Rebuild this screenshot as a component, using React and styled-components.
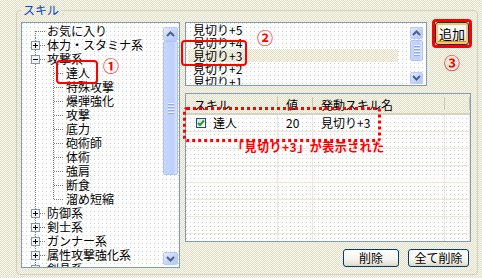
import React from 'react'
import styled, { createGlobalStyle } from 'styled-components'

const dither = `repeating-conic-gradient(#e4e0c6 0 25%, #f9f8f0 0 50%) 0 0 / 2px 2px`
const dots = `conic-gradient(at 1px 1px, #fff 75%, #d4d4d4 0) 0 0 / 4px 4px`

const GlobalStyle = createGlobalStyle`
    html, body {
        margin: 0;
        padding: 0;
    }
    body {
        width: 482px;
        height: 278px;
        overflow: hidden;
        font-family: "Noto Sans CJK JP", "Noto Sans", sans-serif;
        font-size: 12px;
        color: #000;
    }
`

const Page = styled.div`
    width: 482px;
    height: 278px;
    box-sizing: border-box;
    padding: 3px 4px 0 16px;
    background: ${dither};
`

const Group = styled.fieldset`
    margin: 0;
    box-sizing: border-box;
    width: 462px;
    height: 272px;
    padding: 5px 3px 5px 4px;
    border: 1px solid #d0d0bf;
    border-radius: 4px;
`

const Legend = styled.legend`
    padding: 0 2px;
    color: #0046d5;
    font-size: 12px;
    line-height: 14px;
`

const Body = styled.div`
    display: flex;
    gap: 5px;
    height: 246px;
`

/* ---------- tree ---------- */

const Tree = styled.div`
    position: relative;
    width: 159px;
    height: 246px;
    box-sizing: border-box;
    border: 1px solid #7f9db9;
    background: ${dots};
    display: flex;
`

const TreeItems = styled.div`
    flex: 1;
    overflow: hidden;
    padding-top: 1px;
`

const TreeRow = styled.div`
    display: flex;
    align-items: center;
    height: 14px;
    line-height: 14px;
    white-space: nowrap;
`

const Connector = styled.svg`
    flex: none;
    display: block;
    shape-rendering: crispEdges;
`

/* ---------- scrollbar ---------- */

const Scroll = styled.div`
    flex: none;
    width: ${p => p.$w}px;
    box-sizing: border-box;
    padding: ${p => p.$pad};
    display: flex;
    flex-direction: column;
`

const ScrollBtn = styled.div`
    height: ${p => p.$h}px;
    box-sizing: border-box;
    border: 1px solid #b7cbf7;
    border-radius: 2px;
    background: linear-gradient(135deg, #e2ebfe, #c1d3fb 60%, #b3c8f8);
    display: flex;
    align-items: center;
    justify-content: center;
`

const Thumb = styled.div`
    height: ${p => p.$h}px;
    margin-top: ${p => p.$top}px;
    box-sizing: border-box;
    border: 1px solid #b0c5f6;
    border-radius: 2px;
    background: linear-gradient(90deg, #c6d6fc, #bccffb 70%, #d8e3fd);
    display: flex;
    flex-direction: column;
    align-items: center;
    justify-content: center;
    gap: 1px;
`

const Grip = styled.span`
    width: 6px;
    height: 1px;
    background: #eef3ff;
    box-shadow: 0 1px 0 #8fa9ee;
    margin-bottom: 1px;
`

const Spacer = styled.div`
    flex: 1;
`

/* ---------- list ---------- */

const Right = styled.div`
    width: 288px;
    display: flex;
    flex-direction: column;
`

const TopRow = styled.div`
    display: flex;
    align-items: flex-start;
`

const ListWrap = styled.div`
    position: relative;
    width: 242px;
    height: 64px;
`

const ListBox = styled.div`
    height: 100%;
    box-sizing: border-box;
    border: 1px solid #7f9db9;
    background: ${dots};
    display: flex;
`

const ListItems = styled.div`
    flex: 1;
    overflow: hidden;
`

const ListItem = styled.div`
    height: 13px;
    line-height: 13px;
    margin: 0 11px 0 2px;
    padding-left: 5px;
    background: ${p => (p.$selected ? dither : 'transparent')};
`

const AddCol = styled.div`
    margin: -3px 0 0 5px;
    display: flex;
    flex-direction: column;
    align-items: center;
    gap: 6px;
`

const RedFrame = styled.div`
    border: 3px solid #f00;
    border-radius: 4px;
`

const XpButton = styled.div`
    width: ${p => p.$w}px;
    height: ${p => p.$h}px;
    box-sizing: border-box;
    border: 1px solid #003c74;
    border-radius: 3px;
    background: linear-gradient(180deg, #fff 0%, #f5f4ef 55%, #e6e2d5 90%, #d6d0c5 100%);
    box-shadow: ${p => (p.$hot ? 'inset 0 0 0 2px #f9c462, inset 0 -1px 0 2px #e59700' : 'none')};
    display: flex;
    align-items: center;
    justify-content: center;
    font-size: ${p => p.$fs || 12}px;
    line-height: 14px;
`

const Circled = styled.span`
    color: #f00;
    font-size: 16px;
    line-height: 16px;
    font-weight: 700;
`

const CircledAt = styled(Circled)`
    position: absolute;
    left: ${p => p.$x}px;
    top: ${p => p.$y}px;
`

const Marker = styled.div`
    position: absolute;
    left: ${p => p.$x}px;
    top: ${p => p.$y}px;
    width: ${p => p.$w}px;
    height: ${p => p.$h}px;
    box-sizing: border-box;
    border: ${p => (p.$dotted ? '3px dotted #f00' : '2px solid #f00')};
    border-radius: 4px;
`

/* ---------- list view ---------- */

const ListView = styled.div`
    position: relative;
    margin-top: 7px;
    width: 286px;
    height: 149px;
    box-sizing: border-box;
    border: 1px solid #7f9db9;
    background: ${dots};
    display: flex;
    flex-direction: column;
`

const cols = '92px 35px 132px 1fr'

const Header = styled.div`
    flex: none;
    display: grid;
    grid-template-columns: ${cols};
    height: 21px;
    box-sizing: border-box;
    background: ${dither};
    border-bottom: 2px solid #d6d2c2;
`

const HeadCell = styled.div`
    position: relative;
    padding: 2px 0 0 8px;
    line-height: 17px;
    white-space: nowrap;
    &::after {
        content: '';
        position: absolute;
        right: 0;
        top: 3px;
        bottom: 3px;
        width: 1px;
        background: #c9c6b4;
    }
`

const Rows = styled.div`
    flex: 1;
    overflow: hidden;
`

const GridRow = styled.div`
    display: grid;
    grid-template-columns: ${cols};
    height: 17px;
    box-sizing: border-box;
    border-bottom: 1px solid #ebe8d6;
`

const Cell = styled.div`
    display: flex;
    align-items: center;
    gap: 7px;
    padding-left: ${p => p.$pl || 8}px;
    border-right: 1px solid #efe4e4;
    white-space: nowrap;
    line-height: 16px;
`

const Check = styled.span`
    width: 10px;
    height: 10px;
    box-sizing: border-box;
    border: 1px solid #1c5180;
    background: linear-gradient(135deg, #dcdcd7, #fff);
    display: flex;
    align-items: center;
    justify-content: center;
`

const Note = styled.div`
    position: absolute;
    left: 46px;
    top: 46px;
    color: #f00;
    font-weight: 700;
    font-size: 12px;
    line-height: 14px;
    letter-spacing: 0.5px;
    white-space: nowrap;
`

const ButtonRow = styled.div`
    margin-top: 7px;
    padding-right: 4px;
    display: flex;
    justify-content: flex-end;
    gap: 9px;
`

const treeData = [
    { label: 'お気に入り', level: 0, first: true },
    { label: '体力・スタミナ系', level: 0, exp: '+' },
    { label: '攻撃系', level: 0, exp: '-' },
    { label: '達人', level: 1 },
    { label: '特殊攻撃', level: 1 },
    { label: '爆弾強化', level: 1 },
    { label: '攻撃', level: 1 },
    { label: '底力', level: 1 },
    { label: '砲術師', level: 1 },
    { label: '体術', level: 1 },
    { label: '強肩', level: 1 },
    { label: '断食', level: 1 },
    { label: '溜め短縮', level: 1, last: true },
    { label: '防御系', level: 0, exp: '+' },
    { label: '剣士系', level: 0, exp: '+' },
    { label: 'ガンナー系', level: 0, exp: '+' },
    { label: '属性攻撃強化系', level: 0, exp: '+' },
    { label: '剣晶系', level: 0, exp: '+' },
]

const dash = { stroke: '#7a7a7a', strokeWidth: 1, strokeDasharray: '1 1' }

const Lines = ({ item }) => {
    const w = item.level ? 44 : 25
    return (
        <Connector width={w} height="14">
            <line x1="13.5" y1={item.first ? 7 : 0} x2="13.5" y2="14" {...dash} />
            {item.level === 0 && <line x1="14" y1="7.5" x2="23" y2="7.5" {...dash} />}
            {item.level === 1 && (
                <>
                    <line x1="31.5" y1="0" x2="31.5" y2={item.last ? 8 : 14} {...dash} />
                    <line x1="32" y1="7.5" x2="42" y2="7.5" {...dash} />
                </>
            )}
            {item.exp && (
                <>
                    <rect x="9.5" y="3.5" width="8" height="8" fill="#f4f4f0" stroke="#7f97b0" />
                    <line x1="11" y1="7.5" x2="16" y2="7.5" stroke="#000" />
                    {item.exp === '+' && <line x1="13.5" y1="5" x2="13.5" y2="10" stroke="#000" />}
                </>
            )}
        </Connector>
    )
}

const Chevron = ({ up }) => (
    <svg width="9" height="6" viewBox="0 0 9 6">
        <polyline
            points={up ? '1,5 4.5,1.5 8,5' : '1,1 4.5,4.5 8,1'}
            fill="none"
            stroke="#4d6185"
            strokeWidth="2"
        />
    </svg>
)

const ScrollBar = ({ w, pad, up, down, thumb, gap }) => (
    <Scroll $w={w} $pad={pad}>
        <ScrollBtn $h={up}><Chevron up /></ScrollBtn>
        <Thumb $h={thumb} $top={gap}>
            <Grip /><Grip /><Grip /><Grip />
        </Thumb>
        <Spacer />
        <ScrollBtn $h={down}><Chevron /></ScrollBtn>
    </Scroll>
)

const CheckMark = () => (
    <svg width="8" height="8" viewBox="0 0 8 8">
        <polyline points="1,4 3,6 7,1.5" fill="none" stroke="#21a121" strokeWidth="2" />
    </svg>
)

const levels = ['見切り+5', '見切り+4', '見切り+3', '見切り+2', '見切り+1']

const App = () => {
    return (
        <Page>
            <GlobalStyle />
            <Group>
                <Legend>スキル</Legend>
                <Body>
                    <Tree>
                        <TreeItems>
                            {treeData.map(item => (
                                <TreeRow key={item.label}>
                                    <Lines item={item} />
                                    {item.label}
                                </TreeRow>
                            ))}
                        </TreeItems>
                        <ScrollBar w={16} pad="4px 1px 2px 0" up={14} down={13} thumb={134} gap={0} />
                        <Marker $x={34} $y={37} $w={42} $h={24} />
                        <CircledAt $x={81} $y={34}>①</CircledAt>
                    </Tree>

                    <Right>
                        <TopRow>
                            <ListWrap>
                                <ListBox>
                                    <ListItems>
                                        {levels.map(l => (
                                            <ListItem key={l} $selected={l === '見切り+3'}>{l}</ListItem>
                                        ))}
                                    </ListItems>
                                    <ScrollBar w={17} pad="4px 3px 1px 1px" up={12} down={12} thumb={21} gap={1} />
                                </ListBox>
                                <Marker $x={-4} $y={18} $w={66} $h={26} />
                                <CircledAt $x={72} $y={7}>②</CircledAt>
                            </ListWrap>
                            <AddCol>
                                <RedFrame>
                                    <XpButton $w={34} $h={23} $hot $fs={13}>追加</XpButton>
                                </RedFrame>
                                <Circled>③</Circled>
                            </AddCol>
                        </TopRow>

                        <ListView>
                            <Header>
                                <HeadCell>スキル</HeadCell>
                                <HeadCell>値</HeadCell>
                                <HeadCell>発動スキル名</HeadCell>
                                <HeadCell />
                            </Header>
                            <Rows>
                                <GridRow>
                                    <Cell $pl={10}>
                                        <Check><CheckMark /></Check>
                                        達人
                                    </Cell>
                                    <Cell>20</Cell>
                                    <Cell>見切り+3</Cell>
                                    <Cell />
                                </GridRow>
                                {[1, 2, 3, 4, 5, 6, 7].map(i => (
                                    <GridRow key={i}>
                                        <Cell /><Cell /><Cell /><Cell />
                                    </GridRow>
                                ))}
                            </Rows>
                            <Marker $x={-3} $y={13} $w={198} $h={35} $dotted />
                            <Note>「見切り+3」が表示された</Note>
                        </ListView>

                        <ButtonRow>
                            <XpButton $w={56} $h={18}>削除</XpButton>
                            <XpButton $w={61} $h={18}>全て削除</XpButton>
                        </ButtonRow>
                    </Right>
                </Body>
            </Group>
        </Page>
    )
}

export default App
